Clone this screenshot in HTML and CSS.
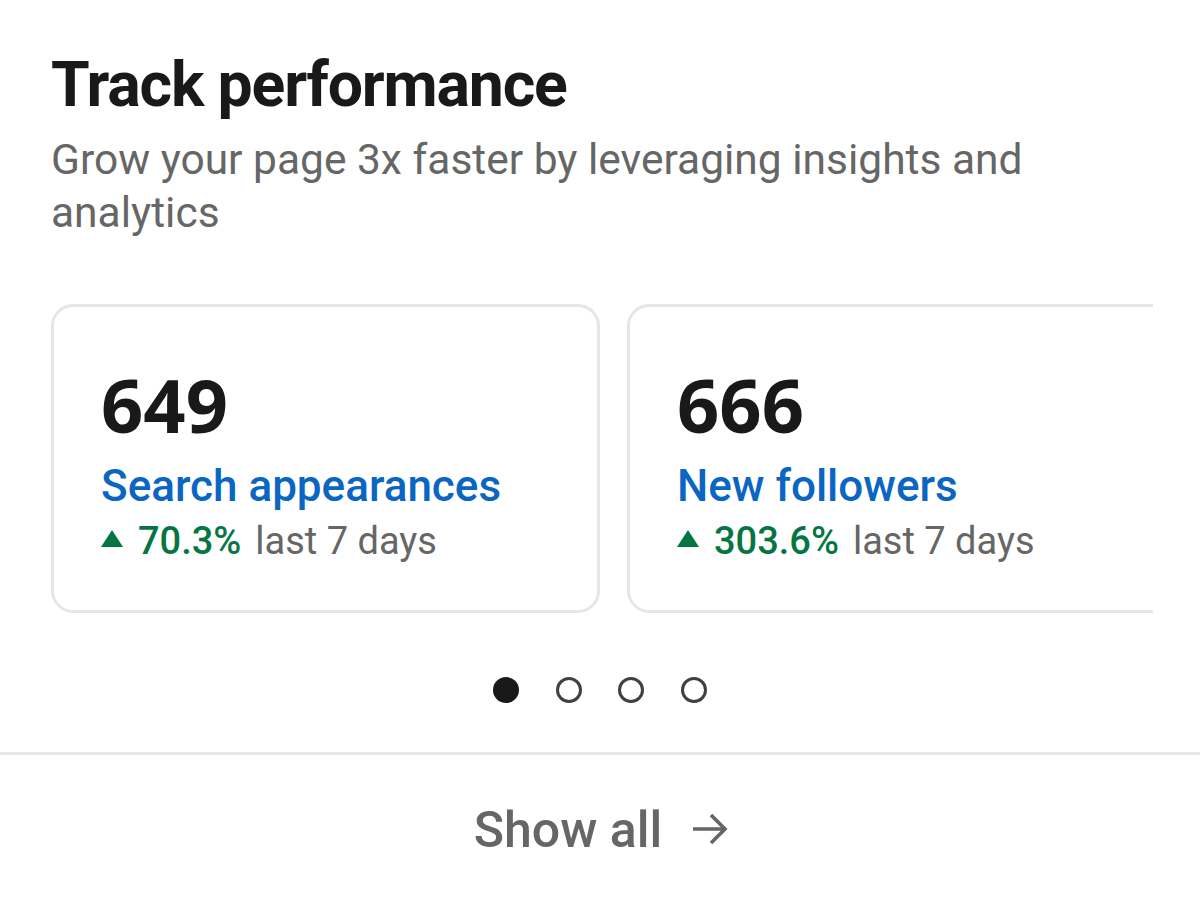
FILE: index.html
```html
<!DOCTYPE html>
<html lang="en">
<head>
<meta charset="utf-8">
<title>Track performance</title>
<link rel="stylesheet" href="styles.css">
</head>
<body>
<section class="panel">
  <header class="head">
    <h1 class="title">Track performance</h1>
    <p class="subtitle">Grow your page 3x faster by leveraging insights and analytics</p>
  </header>
  <div class="carousel">
    <div class="track">
      <article class="card">
        <div class="num">649</div>
        <a class="label">Search appearances</a>
        <div class="trend"><span class="tri"></span><span class="pct">70.3%</span><span class="period">last 7 days</span></div>
      </article>
      <article class="card">
        <div class="num">666</div>
        <a class="label">New followers</a>
        <div class="trend"><span class="tri"></span><span class="pct">303.6%</span><span class="period">last 7 days</span></div>
      </article>
    </div>
  </div>
  <div class="dots">
    <span class="dot on"></span>
    <span class="dot"></span>
    <span class="dot"></span>
    <span class="dot"></span>
  </div>
  <div class="foot">
    <a class="showall">Show all <svg class="arrow" viewBox="0 0 36 34" width="36" height="34"><path d="M1 17H33M19 3L33 17L19 31" fill="none" stroke="#666" stroke-width="3.6" stroke-linecap="butt" stroke-linejoin="miter"/></svg></a>
  </div>
</section>
</body>
</html>
```
FILE: styles.css
```css
html, body {
  margin: 0;
  padding: 0;
  background: #fff;
}
body {
  font-family: Roboto, "Liberation Sans", sans-serif;
  width: 1200px;
  height: 902px;
  overflow: hidden;
}
.panel {
  display: flex;
  flex-direction: column;
}
.head {
  padding: 48px 52px 0 51px;
}
.title {
  margin: 0;
  font-size: 62.5px;
  line-height: 74px;
  font-weight: 700;
  color: #191919;
  letter-spacing: -1.15px;
}
.subtitle {
  margin: 11px 0 0 0;
  font-size: 42.5px;
  line-height: 53px;
  font-weight: 400;
  color: #666;
}
.carousel {
  margin: 65px 47px 0 51px;
  overflow: hidden;
}
.track {
  display: flex;
  gap: 27px;
}
.card {
  flex: 0 0 549px;
  box-sizing: border-box;
  height: 309px;
  border: 3px solid #e6e6e6;
  border-radius: 22px;
  padding: 58px 0 0 47px;
  display: flex;
  flex-direction: column;
}
.num {
  font-family: "Noto Sans", Roboto, sans-serif;
  font-weight: 700;
  font-size: 74px;
  line-height: 80px;
  color: #191919;
}
.label {
  font-size: 44px;
  line-height: 54px;
  font-weight: 500;
  color: #0a66c2;
  margin-top: 14px;
}
.trend {
  margin-top: 2px;
  font-size: 38px;
  line-height: 52px;
  color: #666;
  display: flex;
  align-items: center;
  white-space: nowrap;
}
.tri {
  width: 0;
  height: 0;
  border-left: 11.5px solid transparent;
  border-right: 11.5px solid transparent;
  border-bottom: 17px solid #057642;
  margin-right: 15px;
  margin-top: -5px;
}
.pct {
  color: #057642;
  font-weight: 500;
  margin-right: 14px;
}
.dots {
  display: flex;
  justify-content: center;
  gap: 36.5px;
  margin-top: 64px;
}
.dot {
  width: 26px;
  height: 26px;
  box-sizing: border-box;
  border-radius: 50%;
  border: 3px solid #404040;
}
.dot.on {
  background: #191919;
  border-color: #191919;
}
.foot {
  margin-top: 49px;
  border-top: 3px solid #e8e8e8;
  display: flex;
  justify-content: center;
  padding-top: 45px;
}
.showall {
  display: flex;
  align-items: center;
  gap: 30px;
  font-size: 50px;
  line-height: 60px;
  font-weight: 500;
  color: #666;
  padding-left: 2px;
}
.arrow {
  display: block;
  margin-top: -2px;
}
```
